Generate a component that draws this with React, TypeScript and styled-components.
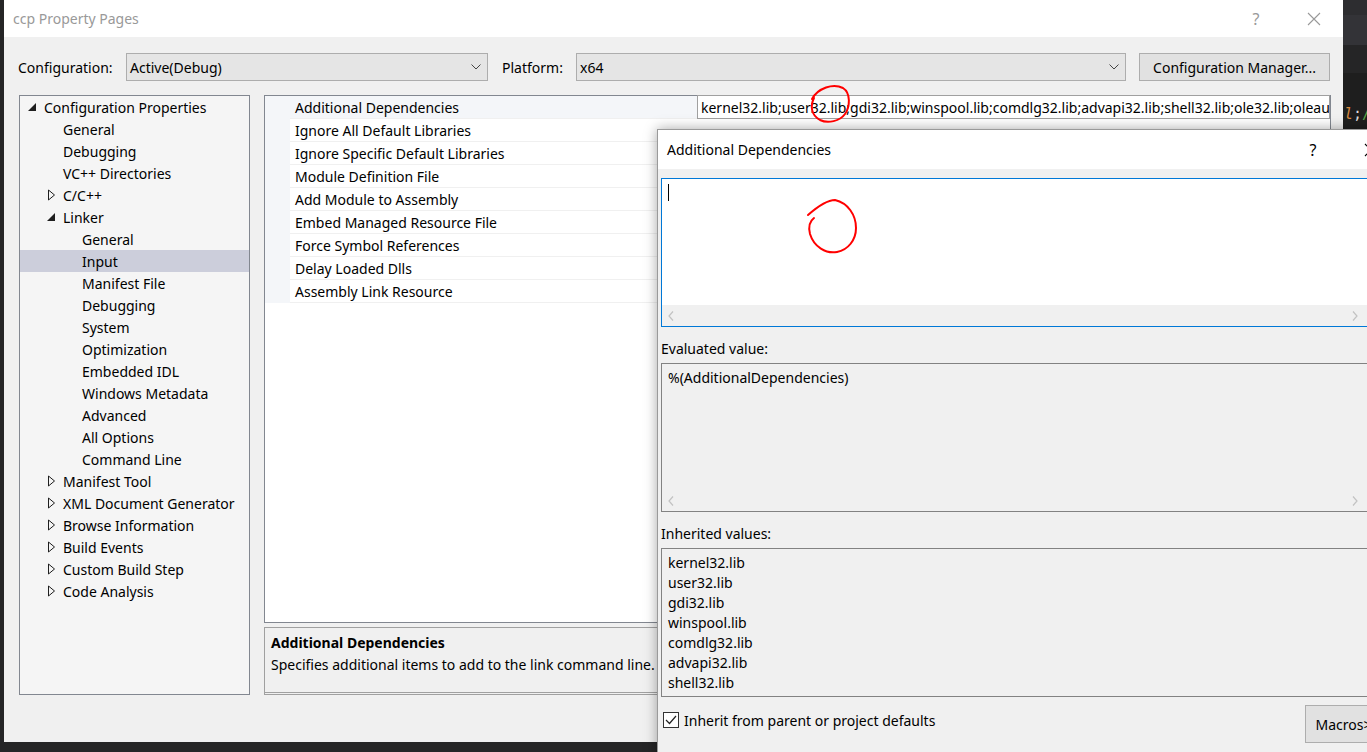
import styled, { createGlobalStyle } from "styled-components";

const FONT = `"Noto Sans", "Open Sans", sans-serif`;

const GlobalStyle = createGlobalStyle`
  html, body {
    margin: 0;
    padding: 0;
    background: #1e1e1e;
    overflow: hidden;
  }
  * { box-sizing: border-box; }
`;

const Desktop = styled.div`
  position: relative;
  width: 1367px;
  height: 752px;
  overflow: hidden;
  background: #252526;
  font-family: ${FONT};
  font-size: 14px;
  color: #000;
`;

const EditorPane = styled.div`
  position: absolute;
  left: 1343px;
  top: 0;
  width: 30px;
  height: 752px;
  background: #1e1e1e;
  display: flex;
  flex-direction: column;
`;

const EditorBand = styled.div<{ $h: number; $bg: string }>`
  height: ${(p) => p.$h}px;
  background: ${(p) => p.$bg};
  flex-shrink: 0;
`;

const CodeLine = styled.div`
  height: 22px;
  line-height: 22px;
  padding-left: 1px;
  font-family: "DejaVu Sans Mono", monospace;
  font-size: 15px;
  white-space: nowrap;
  margin-top: 30px;
`;

const Tok = styled.span<{ $c: string; $i?: boolean }>`
  color: ${(p) => p.$c};
  font-style: ${(p) => (p.$i ? "italic" : "normal")};
`;

/* ---------- outer window ---------- */

const Window = styled.div`
  position: absolute;
  left: 4px;
  top: 0;
  width: 1339px;
  height: 742px;
  background: #f0f0f0;
  display: flex;
  flex-direction: column;
`;

const TitleBar = styled.div<{ $h: number }>`
  height: ${(p) => p.$h}px;
  flex-shrink: 0;
  background: #fff;
  display: flex;
  align-items: center;
  padding-left: 9px;
`;

const Title = styled.div<{ $active?: boolean }>`
  flex: 1;
  font-size: 14px;
  color: ${(p) => (p.$active ? "#000" : "#999")};
`;

const CaptionButton = styled.div<{ $active?: boolean }>`
  width: 58px;
  height: 100%;
  display: flex;
  align-items: center;
  justify-content: center;
  color: ${(p) => (p.$active ? "#000" : "#999")};
  font-size: 16px;
`;

const ConfigRow = styled.div`
  display: flex;
  align-items: center;
  height: 28px;
  margin-top: 16px;
  padding: 0 13px 0 14px;
`;

const FieldLabel = styled.div<{ $w: number; $ml?: number }>`
  width: ${(p) => p.$w}px;
  margin-left: ${(p) => p.$ml ?? 0}px;
  flex-shrink: 0;
`;

const Combo = styled.div<{ $w?: number }>`
  ${(p) => (p.$w ? `width: ${p.$w}px;` : "flex: 1;")}
  height: 28px;
  background: #e5e5e5;
  border: 1px solid #adadad;
  display: flex;
  align-items: center;
  padding: 0 6px 0 3px;
`;

const ComboText = styled.div`
  flex: 1;
`;

const PushButton = styled.div<{ $w: number; $h: number; $ml?: number }>`
  width: ${(p) => p.$w}px;
  height: ${(p) => p.$h}px;
  margin-left: ${(p) => p.$ml ?? 0}px;
  flex-shrink: 0;
  background: #e1e1e1;
  border: 1px solid #adadad;
  display: flex;
  align-items: center;
  justify-content: center;
  white-space: nowrap;
`;

const Main = styled.div`
  display: flex;
  gap: 14px;
  height: 600px;
  margin-top: 14px;
  padding-left: 15px;
`;

const Tree = styled.div`
  width: 231px;
  flex-shrink: 0;
  background: #f5f5f5;
  border: 1px solid #828790;
  display: flex;
  flex-direction: column;
`;

const TreeItem = styled.div<{ $level: number; $selected?: boolean }>`
  height: 22px;
  display: flex;
  align-items: center;
  padding-left: ${(p) => 5 + p.$level * 19}px;
  background: ${(p) => (p.$selected ? "#cccedb" : "transparent")};
  white-space: nowrap;
`;

const Toggle = styled.div`
  width: 19px;
  height: 22px;
  flex-shrink: 0;
  display: flex;
  align-items: center;
`;

const RightColumn = styled.div`
  width: 1067px;
  display: flex;
  flex-direction: column;
  gap: 4px;
`;

const Grid = styled.div`
  height: 528px;
  background: #fff;
  border: 1px solid #828790;
  display: flex;
  flex-direction: column;
`;

const GridRow = styled.div<{ $current?: boolean }>`
  height: 23px;
  display: flex;
  background: ${(p) => (p.$current ? "#f4f6f9" : "#fff")};
`;

const Gutter = styled.div`
  width: 25px;
  background: #f4f6f9;
  flex-shrink: 0;
`;

const NameCell = styled.div`
  width: 407px;
  flex-shrink: 0;
  padding-left: 5px;
  display: flex;
  align-items: center;
  border-bottom: 1px solid #f0f0f0;
  white-space: nowrap;
`;

const ValueCell = styled.div<{ $boxed?: boolean }>`
  flex: 1;
  min-width: 0;
  display: flex;
  align-items: center;
  padding-left: 3px;
  white-space: nowrap;
  overflow: hidden;
  background: #fff;
  border: ${(p) => (p.$boxed ? "1px solid #a0a0a0" : "none")};
  border-bottom: 1px solid ${(p) => (p.$boxed ? "#a0a0a0" : "#f0f0f0")};
  margin-top: ${(p) => (p.$boxed ? "-1px" : "0")};
`;

const Description = styled.div`
  height: 68px;
  background: #f0f0f0;
  border: 1px solid #a0a0a0;
  border-bottom: 3px double #a0a0a0;
  padding: 4px 6px;
  display: flex;
  flex-direction: column;
  overflow: hidden;
`;

const DescTitle = styled.div`
  font-weight: 700;
  height: 22px;
  line-height: 22px;
`;

const DescText = styled.div`
  height: 22px;
  line-height: 22px;
  white-space: nowrap;
`;

/* ---------- inner dialog ---------- */

const Dialog = styled.div`
  position: absolute;
  left: 657px;
  top: 129px;
  width: 744px;
  height: 640px;
  background: #f0f0f0;
  border: 1px solid #9a9a9a;
  box-shadow: 0 0 12px rgba(0, 0, 0, 0.35);
  display: flex;
  flex-direction: column;
`;

const DialogBody = styled.div`
  display: flex;
  flex-direction: column;
  padding: 9px 10px 0 3px;
`;

const TextBox = styled.div<{ $focused?: boolean; $bg: string }>`
  height: 149px;
  border: 1px solid ${(p) => (p.$focused ? "#0078d7" : "#828282")};
  background: ${(p) => p.$bg};
  display: flex;
  flex-direction: column;
`;

const TextArea = styled.div`
  flex: 1;
  padding: 4px 6px 0;
`;

const TextLine = styled.div`
  height: 20px;
  line-height: 20px;
`;

const Caret = styled.div`
  width: 1px;
  height: 17px;
  margin-top: 1px;
  background: #000;
`;

const HScroll = styled.div`
  height: 21px;
  background: #f0f0f0;
  display: flex;
  align-items: center;
  justify-content: space-between;
  padding: 0 31px 0 6px;
`;

const SectionLabel = styled.div`
  height: 20px;
  line-height: 20px;
  margin: 12px 0 4px;
`;

const Footer = styled.div`
  display: flex;
  justify-content: space-between;
  align-items: flex-start;
  margin-top: 8px;
`;

const CheckLabel = styled.div`
  height: 30px;
  display: flex;
  align-items: center;
  gap: 5px;
  padding-left: 2px;
`;

const CheckBox = styled.div`
  width: 16px;
  height: 16px;
  border: 1px solid #333;
  background: #fff;
  display: flex;
  align-items: center;
  justify-content: center;
`;

const Annotations = styled.svg`
  position: absolute;
  left: 0;
  top: 0;
  pointer-events: none;
`;

/* ---------- small drawings ---------- */

function Chevron() {
  return (
    <svg width="10" height="6" viewBox="0 0 10 6">
      <path d="M0.5 0.5 L5 5 L9.5 0.5" fill="none" stroke="#444" strokeWidth="1" />
    </svg>
  );
}

function Arrow({ dir }: { dir: "left" | "right" }) {
  return (
    <svg width="6" height="10" viewBox="0 0 6 10">
      <path
        d={dir === "left" ? "M5 0.5 L1 5 L5 9.5" : "M1 0.5 L5 5 L1 9.5"}
        fill="none"
        stroke="#c2c2c2"
        strokeWidth="1.2"
      />
    </svg>
  );
}

function Expander({ open }: { open: boolean }) {
  if (open)
    return (
      <svg width="19" height="10" viewBox="0 0 19 10">
        <path d="M11 1 L11 9 L3 9 Z" fill="#1e1e1e" />
      </svg>
    );
  return (
    <svg width="19" height="12" viewBox="0 0 19 12">
      <path d="M4.5 1 L10.5 6 L4.5 11 Z" fill="none" stroke="#1e1e1e" strokeWidth="1" />
    </svg>
  );
}

function CloseGlyph({ color }: { color: string }) {
  return (
    <svg width="14" height="14" viewBox="0 0 14 14">
      <path d="M1 1 L13 13 M13 1 L1 13" stroke={color} strokeWidth="1.1" />
    </svg>
  );
}

type Node = { label: string; level: number; toggle?: "open" | "closed"; selected?: boolean };

const tree: Node[] = [
  { label: "Configuration Properties", level: 0, toggle: "open" },
  { label: "General", level: 1 },
  { label: "Debugging", level: 1 },
  { label: "VC++ Directories", level: 1 },
  { label: "C/C++", level: 1, toggle: "closed" },
  { label: "Linker", level: 1, toggle: "open" },
  { label: "General", level: 2 },
  { label: "Input", level: 2, selected: true },
  { label: "Manifest File", level: 2 },
  { label: "Debugging", level: 2 },
  { label: "System", level: 2 },
  { label: "Optimization", level: 2 },
  { label: "Embedded IDL", level: 2 },
  { label: "Windows Metadata", level: 2 },
  { label: "Advanced", level: 2 },
  { label: "All Options", level: 2 },
  { label: "Command Line", level: 2 },
  { label: "Manifest Tool", level: 1, toggle: "closed" },
  { label: "XML Document Generator", level: 1, toggle: "closed" },
  { label: "Browse Information", level: 1, toggle: "closed" },
  { label: "Build Events", level: 1, toggle: "closed" },
  { label: "Custom Build Step", level: 1, toggle: "closed" },
  { label: "Code Analysis", level: 1, toggle: "closed" },
];

const properties = [
  "Additional Dependencies",
  "Ignore All Default Libraries",
  "Ignore Specific Default Libraries",
  "Module Definition File",
  "Add Module to Assembly",
  "Embed Managed Resource File",
  "Force Symbol References",
  "Delay Loaded Dlls",
  "Assembly Link Resource",
];

const inherited = [
  "kernel32.lib",
  "user32.lib",
  "gdi32.lib",
  "winspool.lib",
  "comdlg32.lib",
  "advapi32.lib",
  "shell32.lib",
];

const depsValue =
  "kernel32.lib;user32.lib;gdi32.lib;winspool.lib;comdlg32.lib;advapi32.lib;shell32.lib;ole32.lib;oleaut32.lib;uuid.lib;odbc32.lib;odbccp32.lib;%(AdditionalDependencies)";

export default function App() {
  return (
    <>
      <GlobalStyle />
      <Desktop>
        <EditorPane>
          <EditorBand $h={15} $bg="#2d2d30" />
          <EditorBand $h={30} $bg="#333337" />
          <EditorBand $h={28} $bg="#252526" />
          <CodeLine>
            <Tok $c="#d7893e" $i>l</Tok>
            <Tok $c="#dcdcdc">;</Tok>
            <Tok $c="#57a64a">/</Tok>
          </CodeLine>
        </EditorPane>

        <Window>
          <TitleBar $h={37}>
            <Title>ccp Property Pages</Title>
            <CaptionButton>?</CaptionButton>
            <CaptionButton>
              <CloseGlyph color="#999" />
            </CaptionButton>
          </TitleBar>

          <ConfigRow>
            <FieldLabel $w={108}>Configuration:</FieldLabel>
            <Combo $w={362}>
              <ComboText>Active(Debug)</ComboText>
              <Chevron />
            </Combo>
            <FieldLabel $w={74} $ml={14}>
              Platform:
            </FieldLabel>
            <Combo>
              <ComboText>x64</ComboText>
              <Chevron />
            </Combo>
            <PushButton $w={191} $h={28} $ml={13}>
              Configuration Manager...
            </PushButton>
          </ConfigRow>

          <Main>
            <Tree>
              {tree.map((n, i) => (
                <TreeItem key={i} $level={n.level} $selected={n.selected}>
                  <Toggle>{n.toggle && <Expander open={n.toggle === "open"} />}</Toggle>
                  {n.label}
                </TreeItem>
              ))}
            </Tree>

            <RightColumn>
              <Grid>
                {properties.map((name, i) => (
                  <GridRow key={name} $current={i === 0}>
                    <Gutter />
                    <NameCell>{name}</NameCell>
                    <ValueCell $boxed={i === 0}>{i === 0 ? depsValue : ""}</ValueCell>
                  </GridRow>
                ))}
              </Grid>
              <Description>
                <DescTitle>Additional Dependencies</DescTitle>
                <DescText>
                  Specifies additional items to add to the link command line. [i.e. kernel32.lib]
                </DescText>
              </Description>
            </RightColumn>
          </Main>
        </Window>

        <Dialog>
          <TitleBar $h={39}>
            <Title $active>Additional Dependencies</Title>
            <CaptionButton $active>?</CaptionButton>
            <CaptionButton $active>
              <CloseGlyph color="#000" />
            </CaptionButton>
          </TitleBar>

          <DialogBody>
            <TextBox $focused $bg="#fff">
              <TextArea>
                <Caret />
              </TextArea>
              <HScroll>
                <Arrow dir="left" />
                <Arrow dir="right" />
              </HScroll>
            </TextBox>

            <SectionLabel>Evaluated value:</SectionLabel>
            <TextBox $bg="#f0f0f0">
              <TextArea>
                <TextLine>%(AdditionalDependencies)</TextLine>
              </TextArea>
              <HScroll>
                <Arrow dir="left" />
                <Arrow dir="right" />
              </HScroll>
            </TextBox>

            <SectionLabel>Inherited values:</SectionLabel>
            <TextBox $bg="#f0f0f0">
              <TextArea>
                {inherited.map((lib) => (
                  <TextLine key={lib}>{lib}</TextLine>
                ))}
              </TextArea>
            </TextBox>

            <Footer>
              <CheckLabel>
                <CheckBox>
                  <svg width="12" height="10" viewBox="0 0 12 10">
                    <path d="M1 5 L4.5 8.5 L11 1" fill="none" stroke="#222" strokeWidth="1.2" />
                  </svg>
                </CheckBox>
                Inherit from parent or project defaults
              </CheckLabel>
              <PushButton $w={85} $h={38}>
                Macros&gt;&gt;
              </PushButton>
            </Footer>
          </DialogBody>
        </Dialog>

        <Annotations width="1367" height="752" viewBox="0 0 1367 752">
          <path
            d="M812 99 C818 88, 833 83, 843 88 C851 93, 850 107, 845 114 C840 121, 828 124, 820 120 C811 115, 810 106, 814 98"
            fill="none"
            stroke="#f00"
            strokeWidth="2"
            strokeLinecap="round"
          />
          <path
            d="M808 215 C816 208, 826 200, 835 200 C848 203, 856 215, 856 228 C856 240, 848 250, 837 252 C826 254, 814 247, 810 234 C808 226, 810 221, 814 218"
            fill="none"
            stroke="#f00"
            strokeWidth="2"
            strokeLinecap="round"
          />
        </Annotations>
      </Desktop>
    </>
  );
}
